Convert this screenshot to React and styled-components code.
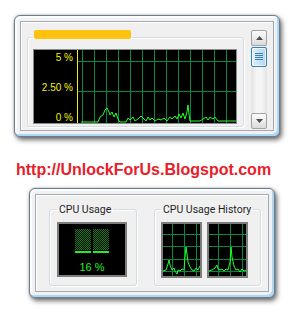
import React from "react";
import styled, { createGlobalStyle } from "styled-components";

const Global = createGlobalStyle`
  html, body { margin: 0; padding: 0; background: #ffffff; }
  body { font-family: "Liberation Sans", Arial, sans-serif; }
`;

const Page = styled.div`
  width: 297px;
  height: 316px;
  box-sizing: border-box;
  padding: 15px 0 0 14px;
  display: flex;
  flex-direction: column;
  align-items: flex-start;
`;

const Frame = styled.div`
  box-sizing: border-box;
  width: ${(p) => p.$w}px;
  height: ${(p) => p.$h}px;
  margin-left: ${(p) => p.$ml || 0}px;
  padding: 5px;
  border: 1px solid #6c7d8e;
  border-radius: 6px;
  background: #eef2f6;
  box-shadow: inset -2px -2px 0 #afd6f3, inset 2px 2px 0 #fbfdff,
    2px 3px 5px rgba(0, 0, 0, 0.55), 0 0 3px rgba(0, 0, 0, 0.25);
  display: flex;
`;

const Panel = styled.div`
  flex: 1;
  box-sizing: border-box;
  background: #f0f0f0;
  border: 1px solid #a9a9a9;
  box-shadow: inset 1px 1px 0 #ffffff;
  display: flex;
  align-items: flex-start;
  padding: ${(p) => p.$pad};
  gap: ${(p) => p.$gap}px;
`;

const Group = styled.fieldset`
  margin: ${(p) => p.$mt || 0}px 0 0 0;
  box-sizing: border-box;
  width: ${(p) => p.$w}px;
  height: ${(p) => p.$h}px;
  padding: ${(p) => p.$pad};
  border: 1px solid #d3dce3;
  border-radius: 3px;
  box-shadow: inset 1px 1px 0 #ffffff, 1px 1px 0 #ffffff;
  display: flex;
  gap: ${(p) => p.$gap || 0}px;
  align-items: flex-start;
`;

const BarLegend = styled.legend`
  padding: 0 1px;
  height: 14px;
  display: flex;
  align-items: flex-start;
`;

const Redacted = styled.span`
  display: block;
  width: 97px;
  height: 9px;
  background: #ffc20e;
  border-radius: 2px;
`;

const TextLegend = styled.legend`
  padding: 0 2px;
  font-family: Roboto, "Liberation Sans", sans-serif;
  font-size: 10.5px;
  line-height: 13px;
  color: #1e1e1e;
  white-space: nowrap;
`;

const Chart = styled.div`
  box-sizing: border-box;
  width: 204px;
  height: 75px;
  background: #000;
  border: 1px solid #8a8a8a;
  display: flex;
`;

const Axis = styled.div`
  width: 43px;
  box-sizing: border-box;
  padding: 3px 4px 0 0;
  display: flex;
  flex-direction: column;
  align-items: flex-end;
  gap: 20px;
`;

const AxisLabel = styled.span`
  font-family: "Liberation Sans", Arial, sans-serif;
  font-size: 10px;
  line-height: 10px;
  height: 10px;
  color: #f2f200;
  white-space: nowrap;
`;

const Scrollbar = styled.div`
  margin-top: 8px;
  width: 16px;
  height: 99px;
  display: flex;
  flex-direction: column;
  gap: 1px;
  background: linear-gradient(90deg, #e3e3e3, #f5f5f5 35%, #f5f5f5 65%, #e3e3e3);
`;

const ArrowButton = styled.div`
  box-sizing: border-box;
  width: 16px;
  height: 16px;
  border: 1px solid #a2a2a2;
  border-radius: 2px;
  background: linear-gradient(#fbfbfb, #ececec 50%, #dadada);
  display: flex;
  align-items: center;
  justify-content: center;
`;

const Thumb = styled.div`
  box-sizing: border-box;
  width: 16px;
  height: 20px;
  border: 1px solid #3c7fb1;
  border-radius: 2px;
  background: linear-gradient(90deg, #e3f1fc, #c5e2f8 50%, #b2d7f4);
  box-shadow: inset 0 0 0 1px rgba(255, 255, 255, 0.7);
  display: flex;
  align-items: center;
  justify-content: center;
`;

const Track = styled.div`
  flex: 1;
`;

const Url = styled.div`
  margin: 24px 0 0 2px;
  font-family: "Liberation Sans", Arial, sans-serif;
  font-weight: bold;
  font-size: 16px;
  line-height: 18px;
  color: #e8202a;
  white-space: nowrap;
`;

const Spacer = styled.div`
  height: 9px;
`;

const Meter = styled.div`
  box-sizing: border-box;
  width: 70px;
  height: 55px;
  background: #000;
  border: 2px solid #7d7d7d;
  display: flex;
  flex-direction: column;
  align-items: center;
  padding-top: 5px;
`;

const Bars = styled.div`
  display: flex;
  gap: 2px;
`;

const BarCol = styled.div`
  display: flex;
  flex-direction: column;
  gap: 1px;
`;

const Level = styled.div`
  width: 16px;
  height: 2px;
  background: #1df21d;
`;

const Percent = styled.div`
  margin-top: 8px;
  font-family: "Liberation Sans", Arial, sans-serif;
  font-size: 11px;
  line-height: 13px;
  color: #1ef01e;
`;

const History = styled.div`
  box-sizing: border-box;
  width: 41px;
  height: 56px;
  background: #000;
  border: 2px solid #7d7d7d;
  display: flex;
`;

const GRID = "#008a45";
const LINE = "#22ff22";

const mainPts =
  "4,72 21,72 23,67 26,65 28,60 30,58 32,62 33,65 35,62 37,67 39,63 41,69 43,72 49,72 51,68 53,70 56,67 58,71 61,69 64,66 66,68 69,71 71,67 73,70 75,68 78,71 81,69 84,70 87,68 90,71 93,67 95,69 98,66 100,69 102,64 104,68 106,63 108,69 110,62 111,55 112,64 113,71 119,71 123,71 126,69 129,67 131,70 133,67 136,69 138,67 141,71 159,71";

function MainPlot() {
  const xs = [];
  for (let x = 5.5; x < 159; x += 12) xs.push(x);
  return (
    <svg width="159" height="73" viewBox="0 0 159 73">
      {xs.map((x) => (
        <line key={x} x1={x} y1="0" x2={x} y2="73" stroke={GRID} strokeWidth="1" />
      ))}
      {[11.5, 41.5].map((y) => (
        <line key={y} x1="0" y1={y} x2="159" y2={y} stroke={GRID} strokeWidth="1" />
      ))}
      <line x1="0.5" y1="0" x2="0.5" y2="73" stroke="#f2f200" strokeWidth="1" />
      <polyline points={mainPts} fill="none" stroke={LINE} strokeWidth="1" />
    </svg>
  );
}

function Dots({ id }) {
  return (
    <svg width="16" height="21" viewBox="0 0 16 21" shapeRendering="crispEdges">
      <defs>
        <pattern id={id} width="2" height="2" patternUnits="userSpaceOnUse">
          <rect x="0" y="0" width="1" height="1" fill="#0f7f0f" />
          <rect x="1" y="1" width="1" height="1" fill="#0f7f0f" />
        </pattern>
      </defs>
      <rect x="0" y="0" width="16" height="21" fill={`url(#${id})`} />
    </svg>
  );
}

function HistoryPlot({ points }) {
  return (
    <svg width="37" height="52" viewBox="0 0 37 52">
      {[9.5, 21.5, 33.5].map((x) => (
        <line key={x} x1={x} y1="0" x2={x} y2="52" stroke={GRID} strokeWidth="1" />
      ))}
      {[10.5, 22.5, 35.5, 47.5].map((y) => (
        <line key={y} x1="0" y1={y} x2="37" y2={y} stroke={GRID} strokeWidth="1" />
      ))}
      <polyline points={points} fill="none" stroke={LINE} strokeWidth="1" />
    </svg>
  );
}

const hist1 =
  "0,47 3,46 5,40 6,36 7,41 9,46 11,44 12,47 14,50 15,46 17,47 19,45 21,46 22,33 23,23 24,30 25,38 27,43 29,46 31,47 33,44 35,46 37,42";
const hist2 =
  "0,47 3,46 6,44 8,41 9,45 11,46 13,45 15,47 17,45 19,46 21,38 22,23 23,33 25,42 27,46 29,45 31,48 33,45 35,47 37,46";

function UpArrow() {
  return (
    <svg width="7" height="4" viewBox="0 0 7 4">
      <polygon points="3.5,0 7,4 0,4" fill="#4d4d4d" />
    </svg>
  );
}

function DownArrow() {
  return (
    <svg width="7" height="4" viewBox="0 0 7 4">
      <polygon points="0,0 7,0 3.5,4" fill="#4d4d4d" />
    </svg>
  );
}

function Grip() {
  return (
    <svg width="8" height="8" viewBox="0 0 8 8">
      {[0.5, 2.5, 4.5, 6.5].map((y) => (
        <line key={y} x1="0" y1={y} x2="8" y2={y} stroke="#3c7fb1" strokeWidth="1" />
      ))}
    </svg>
  );
}

export default function App() {
  return (
    <>
      <Global />
      <Page>
        <Frame $w={266} $h={122}>
          <Panel $pad="0 6px 0 6px" $gap={7}>
            <Group $w={217} $h={97} $pad="5px 6px 2px 5px" $mt={8}>
              <BarLegend>
                <Redacted />
              </BarLegend>
              <Chart>
                <Axis>
                  <AxisLabel>5 %</AxisLabel>
                  <AxisLabel>2.50 %</AxisLabel>
                  <AxisLabel>0 %</AxisLabel>
                </Axis>
                <MainPlot />
              </Chart>
            </Group>
            <Scrollbar>
              <ArrowButton>
                <UpArrow />
              </ArrowButton>
              <Thumb>
                <Grip />
              </Thumb>
              <Track />
              <ArrowButton>
                <DownArrow />
              </ArrowButton>
            </Scrollbar>
          </Panel>
        </Frame>
        <Url>http://UnlockForUs.Blogspot.com</Url>
        <Spacer />
        <Frame $w={246} $h={110} $ml={15}>
          <Panel $pad="8px 0 0 13px" $gap={17}>
            <Group $w={88} $h={83} $pad="6px 9px 8px 7px">
              <TextLegend>CPU Usage</TextLegend>
              <Meter>
                <Bars>
                  <BarCol>
                    <Dots id="dotsA" />
                    <Level />
                  </BarCol>
                  <BarCol>
                    <Dots id="dotsB" />
                    <Level />
                  </BarCol>
                </Bars>
                <Percent>16 %</Percent>
              </Meter>
            </Group>
            <Group $w={102} $h={83} $pad="6px 7px 7px 6px" $gap={5}>
              <TextLegend>CPU Usage History</TextLegend>
              <History>
                <HistoryPlot points={hist1} />
              </History>
              <History>
                <HistoryPlot points={hist2} />
              </History>
            </Group>
          </Panel>
        </Frame>
      </Page>
    </>
  );
}
